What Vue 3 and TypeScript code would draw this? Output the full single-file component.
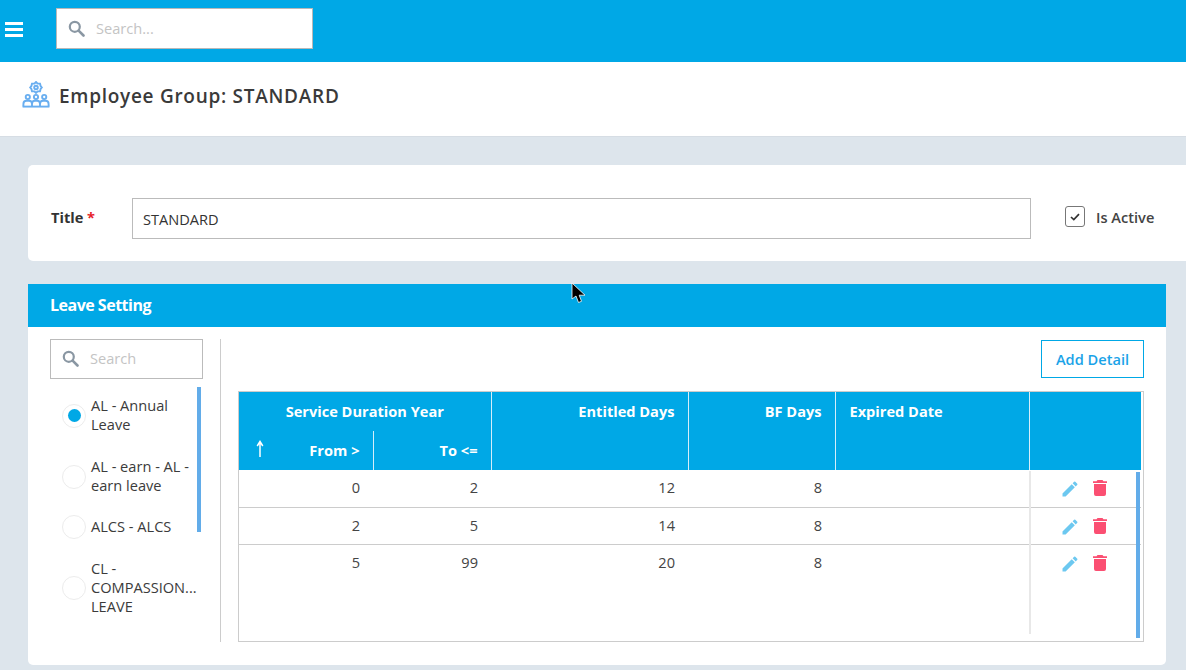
<script setup lang="ts">
interface Row { from: number; to: number; days: number; bf: number }
const rows: Row[] = [
  { from: 0, to: 2, days: 12, bf: 8 },
  { from: 2, to: 5, days: 14, bf: 8 },
  { from: 5, to: 99, days: 20, bf: 8 },
]
interface Leave { label: string; checked: boolean; cls: string }
const leaves: Leave[] = [
  { label: 'AL - Annual Leave', checked: true, cls: 'first' },
  { label: 'AL - earn - AL - earn leave', checked: false, cls: 'second' },
  { label: 'ALCS - ALCS', checked: false, cls: 'third' },
  { label: 'CL - COMPASSION... LEAVE', checked: false, cls: 'fourth' },
]
</script>

<template>
  <div class="page">
    <header class="topbar">
      <div class="burger"><span></span><span></span><span></span></div>
      <div class="topsearch">
        <svg class="mag" width="17" height="17" viewBox="0 0 17 17"><circle cx="6.8" cy="6.8" r="5" fill="none" stroke="#8a97a3" stroke-width="2.2"/><path d="M10.6 10.6 15.5 15.5" stroke="#8a97a3" stroke-width="2.6" stroke-linecap="round"/></svg>
        <span class="ph">Search...</span>
      </div>
    </header>

    <section class="titlebar">
      <svg class="groupicon" width="28" height="27" viewBox="0 0 28 27" fill="none" stroke="#69aef0" stroke-width="1.9">
        <path d="M14 1 15.6 2.6 18 2.6 18.6 5 19.8 6.5 18.6 8 18 10.4 15.6 10.4 14 12 12.4 10.4 10 10.4 9.4 8 8.2 6.5 9.4 5 10 2.6 12.4 2.6Z"/>
        <circle cx="14" cy="6.5" r="1.8"/>
        <circle cx="5.8" cy="16" r="2.1"/><circle cx="14" cy="16" r="2.1"/><circle cx="22.2" cy="16" r="2.1"/>
        <path d="M1.4 25.5V23C1.4 21 3 19.8 4.6 19.8H7C8.6 19.8 10 21 10 23V25.5M10 23C10 21 11.2 19.8 12.8 19.8H15.2C16.8 19.8 18 21 18 23V25.5M18 23C18 21 19.4 19.8 21 19.8H23.4C25 19.8 26.6 21 26.6 23V25.5"/>
        <path d="M.6 25.6H27.4" stroke-width="1.9"/>
      </svg>
      <h1>Employee Group: STANDARD</h1>
    </section>

    <main class="content">
      <section class="card titlecard">
        <label class="lbl">Title <em>*</em></label>
        <div class="titleinput">STANDARD</div>
        <span class="check">
          <svg width="10" height="8" viewBox="0 0 10 8"><path d="M1 4 3.8 6.6 9 1.2" fill="none" stroke="#333" stroke-width="1.7"/></svg>
        </span>
        <span class="active">Is Active</span>
      </section>

      <section class="card leavecard">
        <div class="leavehead">Leave Setting</div>
        <div class="leavebody">
          <aside class="side">
            <div class="sidesearch">
              <svg class="mag" width="17" height="17" viewBox="0 0 17 17"><circle cx="6.8" cy="6.8" r="5" fill="none" stroke="#8a97a3" stroke-width="2.2"/><path d="M10.6 10.6 15.5 15.5" stroke="#8a97a3" stroke-width="2.6" stroke-linecap="round"/></svg>
              <span class="ph">Search</span>
            </div>
            <div class="leavelist">
              <div v-for="l in leaves" :key="l.label" class="leave" :class="l.cls">
                <span class="radio" :class="{ on: l.checked }"></span>
                <span class="leavetext">{{ l.label }}</span>
              </div>
              <i class="sidethumb"></i>
            </div>
          </aside>
          <div class="main">
            <div class="actions"><button class="add">Add Detail</button></div>
            <div class="tablewrap">
              <table>
                <colgroup>
                  <col class="c1" /><col class="c2" /><col class="c3" /><col class="c4" /><col class="c5" /><col class="c6" />
                </colgroup>
                <thead>
                  <tr class="hr1">
                    <th colspan="2" class="center">Service Duration Year</th>
                    <th rowspan="2" class="r top sep">Entitled Days</th>
                    <th rowspan="2" class="r top sep">BF Days</th>
                    <th rowspan="2" class="l top sep">Expired Date</th>
                    <th rowspan="2" class="sep"></th>
                  </tr>
                  <tr class="hr2">
                    <th class="r from">
                      <svg class="arrow" width="8" height="18" viewBox="0 0 8 18"><path d="M4 17V2M1.2 6 4 1.5 6.8 6" fill="none" stroke="#fff" stroke-width="1.5"/></svg>
                      From &gt;
                    </th>
                    <th class="r sep short">To &lt;=</th>
                  </tr>
                </thead>
                <tbody>
                  <tr v-for="r in rows" :key="r.from">
                    <td class="r">{{ r.from }}</td>
                    <td class="r">{{ r.to }}</td>
                    <td class="r">{{ r.days }}</td>
                    <td class="r">{{ r.bf }}</td>
                    <td></td>
                    <td class="ops">
                      <svg width="20" height="20" viewBox="0 0 24 24"><path fill="#6cc8f0" d="M3 17.25V21h3.75L17.81 9.94l-3.75-3.75zM20.71 7.04a1 1 0 0 0 0-1.41l-2.34-2.34a1 1 0 0 0-1.41 0l-1.83 1.83 3.75 3.75z"/></svg>
                      <svg width="14" height="16" viewBox="0 0 14 16"><path fill="#fb4f72" d="M4.5 0h5l1 1.3H14V3H0V1.3h3.5zM1 4h12v10a2 2 0 0 1-2 2H3a2 2 0 0 1-2-2z"/></svg>
                    </td>
                  </tr>
                </tbody>
              </table>
              <i class="colline"></i>
              <i class="tablethumb"></i>
            </div>
          </div>
        </div>
      </section>
    </main>

    <svg class="cursor" width="16" height="23" viewBox="0 0 16 23"><path d="M1 1V17L5 14 7.5 20.5 10.5 19.3 8.2 13.2H14Z" fill="#000" stroke="#fff" stroke-width=".8"/></svg>
  </div>
</template>

<style>
html, body { margin: 0; padding: 0; overflow: hidden; }
</style>

<style scoped>
.page {
  position: relative;
  width: 1186px;
  height: 670px;
  overflow: hidden;
  background: #dde5ec;
  font-family: "Open Sans", "Noto Sans", sans-serif;
  font-size: 14.6px;
  color: #333;
}
.topbar {
  height: 62px;
  background: #00a8e6;
  display: flex;
  align-items: center;
  gap: 33px;
  padding: 0 0 0 5px;
  box-sizing: border-box;
}
.burger { width: 18px; display: flex; flex-direction: column; gap: 3px; margin-top: -3px; }
.burger span { display: block; height: 3px; background: #fff; }
.topsearch {
  width: 257px; height: 41px; margin-top: -6px;
  box-sizing: border-box;
  background: #fff;
  border: 1px solid #b8b8b8;
  display: flex; align-items: center;
  padding-left: 11px; gap: 11px;
}
.ph { color: #c4c4c4; font-size: 14.6px; }
.titlebar {
  height: 75px;
  box-sizing: border-box;
  background: #fff;
  border-bottom: 1px solid #d6dde4;
  display: flex; align-items: center;
  padding: 0 0 6px 22px;
  gap: 9px;
}
.titlebar h1 { margin: 0; font-size: 19px; font-weight: 600; color: #3a3a3a; letter-spacing: .72px; }
.groupicon { margin-top: -4px; }
.content { padding: 28px 0 0 28px; display: flex; flex-direction: column; gap: 23px; }
.card { background: #fff; border-radius: 5px; }
.titlecard {
  width: 1170px; height: 96px; box-sizing: border-box;
  display: flex; align-items: center;
  padding: 10px 0 0 23px;
}
.lbl { width: 81px; font-weight: 700; margin-top: -2px; }
.lbl em { color: #e6212a; font-style: normal; }
.titleinput {
  width: 899px; height: 41px; box-sizing: border-box;
  border: 1px solid #bbb; padding: 2px 0 0 10px;
  display: flex; align-items: center;
}
.check {
  width: 20px; height: 21px; box-sizing: border-box; margin: -3px 0 0 34px;
  border: 1px solid #777; border-radius: 3px;
  display: flex; align-items: center; justify-content: center;
}
.active { margin: -2px 0 0 11px; font-weight: 600; color: #444; }
.leavecard { width: 1138px; height: 381px; overflow: hidden; border-radius: 0 0 5px 5px; }
.leavehead {
  height: 43px; background: #00a8e6; color: #fff;
  font-weight: 700; font-size: 16px; line-height: 43px; padding-left: 22px;
  letter-spacing: -.5px;
}
.leavebody { display: flex; padding: 12px 0 0 22px; }
.side { width: 170px; height: 303px; border-right: 1px solid #ccc; }
.sidesearch {
  width: 153px; height: 40px; box-sizing: border-box;
  border: 1px solid #bbb; display: flex; align-items: center; padding: 0 0 2px 11px; gap: 11px;
}
.leavelist { position: relative; margin-top: 8px; padding: 9px 0 0 12px; }
.leave { display: flex; align-items: center; gap: 5px; line-height: 19px; color: #3b3b3b; }
.leavetext { width: 108px; }
.leave.first { height: 38px; margin-bottom: 23px; }
.leave.second { height: 38px; margin-bottom: 19px; }
.leave.third { height: 24px; margin-bottom: 21px; }
.leave.fourth { height: 57px; }
.radio {
  width: 24px; height: 24px; flex: none; box-sizing: border-box; margin-top: 1px;
  border: 1px solid #ececec; border-radius: 50%; background: #fff;
  display: flex; align-items: center; justify-content: center;
}
.radio.on::after { content: ""; width: 13px; height: 13px; border-radius: 50%; background: #00a8e6; }
.sidethumb { position: absolute; left: 147px; top: 0; width: 4px; height: 145px; background: #62ace9; }
.main { margin-left: 17px; width: 906px; }
.actions { display: flex; justify-content: flex-end; height: 51px; margin-top: 1px; }
.add {
  width: 103px; height: 38px; box-sizing: border-box;
  border: 1px solid #00a8e6; background: #fff; color: #1aa3e8;
  font: 600 14.6px "Open Sans", sans-serif;
  padding: 0;
}
.tablewrap { position: relative; width: 906px; height: 251px; box-sizing: border-box; border: 1px solid #ccc; padding-right: 2px; }
table { border-collapse: collapse; table-layout: fixed; width: 902px; }
.c1 { width: 134px; } .c2 { width: 118px; } .c3 { width: 197px; } .c4 { width: 147px; } .c5 { width: 194px; } .c6 { width: 112px; }
th { background: #00a8e6; color: #fff; font-weight: 700; padding: 0 13px; box-sizing: border-box; }
th.sep { border-left: 1px solid #d5eefa; }
.hr1 { height: 39px; }
.hr2 { height: 39px; }
.hr2 th { padding-bottom: 1px; }
th.center { text-align: center; padding: 0 0 2px; }
.r { text-align: right; }
th.l { text-align: left; padding-left: 14px; }
th.top { vertical-align: top; padding-top: 9px; }
th.from { position: relative; }
.arrow { position: absolute; left: 17px; top: 9px; }
td { height: 37px; box-sizing: border-box; border-bottom: 1px solid #ccc; vertical-align: top; padding: 7px 13px 0; color: #444; line-height: 20px; }
tbody tr:last-child td { border-bottom: 0; }
td.ops { padding: 9px 0 0 31px; white-space: nowrap; }
td.ops svg { vertical-align: top; }
td.ops svg + svg { margin: 1px 0 0 13px; }
.colline { position: absolute; left: 790px; top: 79px; width: 2px; height: 163px; background: #e8e8e8; }
.tablethumb { position: absolute; left: 897px; top: 80px; width: 4px; height: 166px; background: #62ace9; }
.cursor { position: absolute; left: 571px; top: 282px; }
</style>
